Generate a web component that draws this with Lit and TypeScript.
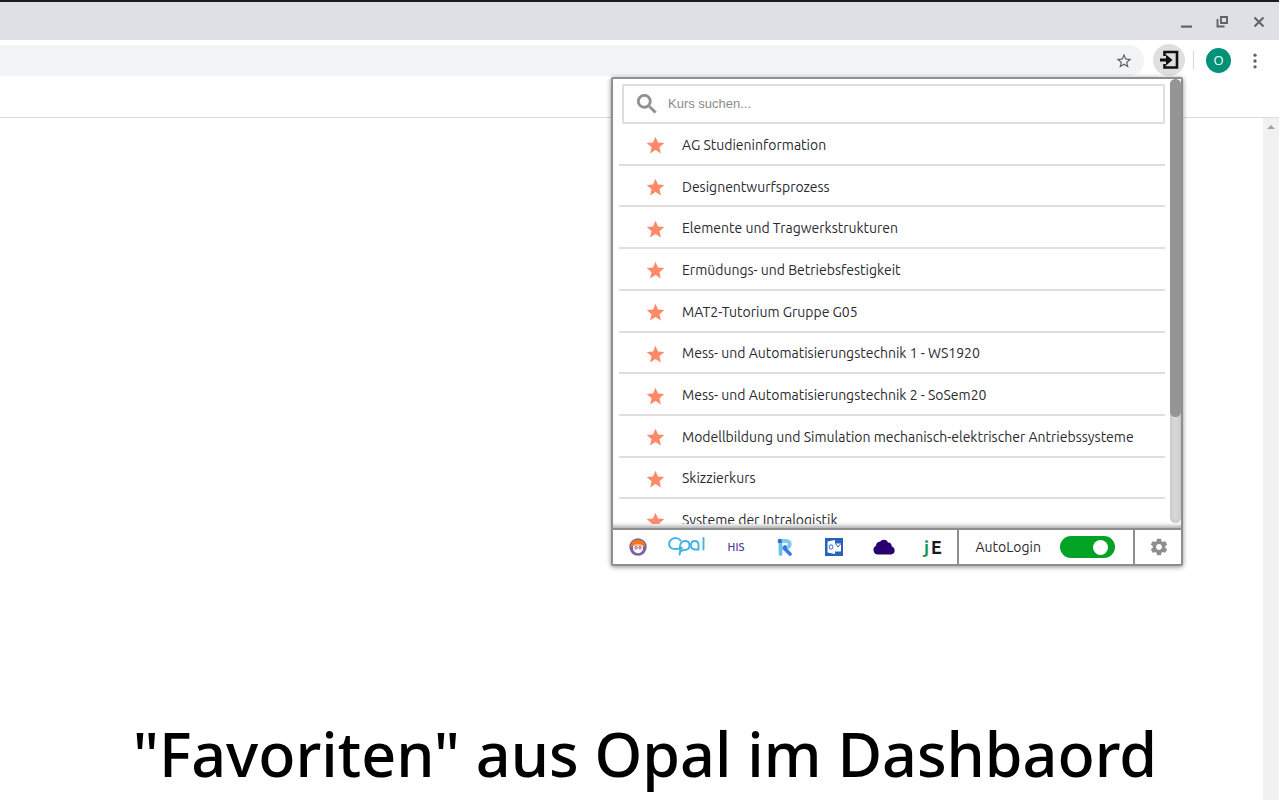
import { LitElement, html, css, svg } from "lit";
import { customElement, state } from "lit/decorators.js";

const COURSES = [
  "AG Studieninformation",
  "Designentwurfsprozess",
  "Elemente und Tragwerkstrukturen",
  "Ermüdungs- und Betriebsfestigkeit",
  "MAT2-Tutorium Gruppe G05",
  "Mess- und Automatisierungstechnik 1 - WS1920",
  "Mess- und Automatisierungstechnik 2 - SoSem20",
  "Modellbildung und Simulation mechanisch-elektrischer Antriebssysteme",
  "Skizzierkurs",
  "Systeme der Intralogistik",
];

const icon = (size: number, body: unknown) =>
  html`<svg width=${size} height=${size} viewBox="0 0 24 24" aria-hidden="true">${body}</svg>`;

const starPath = "M12 17.27L18.18 21l-1.64-7.03L22 9.24l-7.19-.61L12 2 9.19 8.63 2 9.24l5.46 4.73L5.82 21z";

@customElement("browser-bar")
export class BrowserBar extends LitElement {
  static styles = css`
    :host { display: block; color: #5f6368; }
    button { border: 0; padding: 0; margin: 0; background: none; color: inherit; display: grid; place-items: center; font: inherit; }
    svg { display: block; }
    .frame { box-sizing: border-box; height: 40px; border-top: 2px solid #1b1b1d; background: #dee0e6; display: flex; justify-content: flex-end; align-items: center; gap: 12px; padding: 2px 8px 0 0; }
    .frame button { width: 24px; height: 24px; }
    .tools { height: 37px; display: flex; align-items: center; padding-right: 14px; }
    .address { align-self: flex-end; margin-bottom: 1px; height: 31px; flex: 1; display: flex; align-items: center; background: #f1f3f5; border-radius: 0 16px 16px 0; padding-right: 11px; }
    .address input { flex: 1; min-width: 0; border: 0; background: none; outline: 0; }
    .ext { width: 32px; height: 32px; border-radius: 50%; background: #dfdfdf; color: #111; margin: 3px 0 0 9px; }
    .sep { width: 1px; height: 18px; background: #d5d7db; margin: 2px 12px 0 8px; }
    .avatar { width: 25px; height: 25px; border-radius: 50%; background: #009179; color: #fff; font: 13px/25px "Open Sans", sans-serif; margin-top: 3px; }
    .more { width: 20px; height: 24px; margin: 4px 0 0 14px; }
  `;
  render() {
    return html`
      <div class="frame">
        <button aria-label="Minimieren">${icon(24, svg`<path d="M6 15.500h11v2.200H6z" fill="currentColor"/>`)}</button>
        <button aria-label="Verkleinern">${icon(24, svg`<path d="M10 7h6v6h-6zM6.500 9v7.500h7" fill="none" stroke="currentColor" stroke-width="1.900"/>`)}</button>
        <button aria-label="Schließen">${icon(24, svg`<path d="M7.500 7.500l9 9M16.500 7.500l-9 9" stroke="currentColor" stroke-width="2"/>`)}</button>
      </div>
      <div class="tools">
        <div class="address">
          <input type="text" aria-label="Adresse" />
          <button aria-label="Lesezeichen">${icon(18, svg`<path d="M22 9.240l-7.190-.620L12 2 9.190 8.630 2 9.240l5.460 4.730L5.820 21 12 17.270 18.180 21l-1.630-7.030L22 9.240zM12 15.400l-3.760 2.270 1-4.280-3.320-2.880 4.380-.380L12 6.100l1.710 4.040 4.380.380-3.320 2.880 1 4.280L12 15.400z" fill="currentColor"/>`)}</button>
        </div>
        <button class="ext" aria-label="Erweiterung">${icon(24, svg`<path d="M7.500 8V4h12.500v15.500H7.500V16" fill="none" stroke="currentColor" stroke-width="2.600"/><path d="M3 10.400h6V6.500l6.500 5.500L9 17.500v-3.900H3z" fill="currentColor"/>`)}</button>
        <span class="sep"></span>
        <button class="avatar">O</button>
        <button class="more" aria-label="Menü">${icon(20, svg`<g fill="currentColor"><circle cx="12" cy="5" r="2"/><circle cx="12" cy="12" r="2"/><circle cx="12" cy="19" r="2"/></g>`)}</button>
      </div>
    `;
  }
}

@customElement("course-popup")
export class CoursePopup extends LitElement {
  @state() private autoLogin = true;

  static styles = css`
    :host { box-sizing: border-box; display: block; background: #fff; border: 2px solid #8e8e8e; border-radius: 2px; box-shadow: 0 1px 5px rgba(0, 0, 0, 0.45); font-family: Ubuntu, "Noto Sans", sans-serif; color: #2a2a2e; }
    a { color: inherit; text-decoration: none; }
    svg { display: block; }
    .view { box-sizing: border-box; display: flex; height: 449px; padding-bottom: 4px; overflow: hidden; box-shadow: inset 0 -5px 4px -3px rgba(0, 0, 0, 0.35); }
    .content { flex: 1; min-width: 0; padding: 5px 5px 0 6px; overflow: hidden; }
    .search { box-sizing: border-box; height: 40px; margin-left: 3px; border: 2px solid #dedede; border-radius: 2px; display: flex; align-items: center; gap: 8px; padding-left: 10px; color: #8d8d8d; }
    .search input { flex: 1; min-width: 0; border: 0; outline: 0; padding: 0; background: none; font: 13px/18px "Liberation Sans", Arial, sans-serif; color: #333; }
    .search input::placeholder { color: #8a8a8a; opacity: 1; }
    .list { list-style: none; margin: 0; padding: 0; height: 417px; display: grid; grid-auto-rows: 1fr; }
    .list li { box-sizing: border-box; border-bottom: 2px solid #dedede; display: flex; align-items: center; padding: 2px 0 0 26px; }
    .list a { display: flex; align-items: center; gap: 16px; font-size: 14px; line-height: 18px; white-space: nowrap; }
    .star { color: #ff8a69; padding-top: 2px; }
    .track { width: 11px; height: 444px; border-radius: 6px; background: #d6d6d6; box-shadow: inset 0 0 4px rgba(0, 0, 0, 0.14); }
    .thumb { height: 338px; border-radius: 6px; background: #959595; }
    .bar { height: 34px; border-top: 2px solid #8e8e8e; display: flex; align-items: stretch; }
    .links { flex: 1; display: grid; grid-template-columns: repeat(7, 1fr); }
    .links a { display: grid; place-items: center; padding-bottom: 1px; }
    .his { font-size: 11px; line-height: 16px; font-weight: 500; color: #53399a; -webkit-text-stroke: 0; }
    .je { font-size: 18px; line-height: 20px; font-weight: 700; color: #18181a; }
    .je div { display: flex; gap: 2px; }
    .je span { color: #12975a; }
    .auto { display: flex; align-items: center; justify-content: space-between; gap: 19px; padding: 0 18px 0 16px; border-left: 2px solid #8e8e8e; border-right: 2px solid #8e8e8e; font-size: 14px; line-height: 20px; }
    .auto input { appearance: none; margin: 0; width: 55px; height: 22px; border-radius: 11px; background: #bbb; padding: 4px; display: flex; box-sizing: border-box; }
    .auto input::before { content: ""; width: 15px; height: 15px; border-radius: 50%; background: #fff; }
    .auto input:checked { background: #02a224; justify-content: flex-end; padding-right: 7px; }
    .gear { width: 46px; border: 0; background: none; padding: 0 0 0 2px; color: #8e8e8e; display: grid; place-items: center; }
  `;
  render() {
    return html`
      <div class="view">
        <div class="content">
          <label class="search">
            ${icon(26, svg`<path d="M15.500 14h-.790l-.280-.270A6.470 6.470 0 0 0 16 9.500 6.500 6.500 0 1 0 9.500 16c1.610 0 3.090-.590 4.230-1.570l.270.280v.790l5 4.990L20.490 19l-4.990-5zm-6 0C7.010 14 5 11.990 5 9.500S7.010 5 9.500 5 14 7.010 14 9.500 11.990 14 9.500 14z" fill="currentColor" stroke="currentColor" stroke-width=".6"/>`)}
            <input type="text" placeholder="Kurs suchen..." aria-label="Kurs suchen" />
          </label>
          <ul class="list">
            ${COURSES.map((c) => html`<li><a href="#"><span class="star">${icon(21, svg`<path d=${starPath} fill="currentColor"/>`)}</span>${c}</a></li>`)}
          </ul>
        </div>
        <div class="track"><div class="thumb"></div></div>
      </div>
      <div class="bar">
        <nav class="links">
          <a href="#" aria-label="Startseite"><svg width="18" height="18" viewBox="0 0 18 18">
            <circle cx="9" cy="9" r="8.700" fill="#7b63a4"/>
            <path d="M1.800 9.500C1.500 4.500 4.500 1.800 9 1.800s7.500 2.700 7.200 7.700L14 7.500H4z" fill="#f8780f"/>
            <path d="M4 7.500c3-1.500 7-1.500 10 0v3c0 2.500-2 4.500-5 4.500s-5-2-5-4.500z" fill="#fff4f0"/>
            <path d="M4 7.300c3-1.300 7-1.300 10 0l-1 .700H5z" fill="#fbb98a"/>
            <g fill="none" stroke="#7b63a4"><circle cx="7" cy="9.700" r="1.200"/><circle cx="11" cy="9.700" r="1.200"/></g>
            <path d="M6.500 13.500L9 12l2.500 1.500L9 15.500z" fill="#fff"/>
          </svg></a>
          <a href="#" aria-label="Opal"><svg width="37" height="19" viewBox="0 0 37 19" fill="none" stroke="#43b2e4" stroke-width="1.900" stroke-linecap="round">
            <path d="M12.500 3.500C11 .500 6 .400 3.300 2.500-.200 5.300.500 10.500 4.500 11.600c3 .8 6.500.2 9.500-.8"/>
            <path d="M11.500 17.500c1.500-2.500.5-4 .5-7.500 0-4 2-6 5-6s4.500 1.800 4.500 4.300S19.800 13 16.500 13c-3.500 0-5 1.500-5 4.500"/>
            <path d="M30.500 12.500H27c-2.500 0-4-1.600-4-4.200S24.500 4 27 4s3.500 1.500 3.500 4v4.500M35.500 1v11.500"/>
          </svg></a>
          <a href="#" class="his">HIS</a>
          <a href="#" aria-label="Räume"><svg width="16" height="18" viewBox="0 0 16 18" fill="none" stroke-linecap="round">
            <path d="M4 3h5.500a3.200 3.200 0 0 1 0 6.400H7" stroke="#83c9ef" stroke-width="4"/>
            <path d="M3.500 5v11" stroke="#6dbfeb" stroke-width="3.800"/>
            <path d="M7.500 10.500l5.500 5.500" stroke="#367bdf" stroke-width="3.600"/>
            <circle cx="2.800" cy="3" r="2.200" fill="#2d72d8"/><circle cx="8" cy="9" r="1.800" fill="#2d72d8"/>
          </svg></a>
          <a href="#" aria-label="Outlook"><svg width="18" height="18" viewBox="0 0 18 18">
            <path d="M0 0h18v18H0z" fill="#2862b9"/><path d="M2.500 3.500L10 2v14l-7.500-1.500z" fill="#fff"/>
            <path d="M10 5.500h6v8h-6z" fill="#fff"/><path d="M10.500 5.500l2.500 3.500 3-3.500" fill="none" stroke="#2862b9" stroke-width="1"/>
            <ellipse cx="6" cy="9" rx="1.700" ry="2.100" fill="none" stroke="#6b93d2" stroke-width="1.200"/>
          </svg></a>
          <a href="#" aria-label="Cloud"><svg width="22" height="16" viewBox="0 0 22 16"><path d="M5 15.500a4.600 4.600 0 0 1-2-8.700C3 3.700 5.500 2.500 7 2.800 8.500.400 13.500-.200 15 3.500c2.200-.3 4 1.500 3.600 3.800 4.600 1.700 3.700 8.200-.6 8.200z" fill="#28006f"/></svg></a>
          <a href="#" class="je"><div><span>j</span>E</div></a>
        </nav>
        <label class="auto">AutoLogin
          <input type="checkbox" role="switch" .checked=${this.autoLogin} @change=${() => (this.autoLogin = !this.autoLogin)} />
        </label>
        <button class="gear" aria-label="Einstellungen">${icon(20, svg`<path fill="currentColor" d="M19.430 12.980c.040-.320.070-.640.070-.980s-.030-.660-.070-.980l2.110-1.650c.190-.150.240-.420.120-.640l-2-3.460c-.120-.220-.390-.300-.610-.220l-2.490 1c-.520-.400-1.080-.730-1.690-.980l-.380-2.650A.488.488 0 0 0 14 2h-4c-.250 0-.460.180-.490.420l-.380 2.650c-.610.250-1.170.590-1.690.980l-2.490-1c-.230-.090-.490 0-.610.220l-2 3.460c-.130.220-.070.490.120.640l2.110 1.650c-.040.320-.070.650-.070.980s.030.660.070.980l-2.110 1.650c-.190.150-.240.420-.120.640l2 3.460c.120.220.390.300.610.220l2.490-1c.520.400 1.080.730 1.690.980l.380 2.650c.030.240.240.420.490.420h4c.250 0 .460-.180.490-.420l.380-2.650c.610-.250 1.170-.590 1.690-.980l2.490 1c.230.090.490 0 .610-.220l2-3.460c.120-.220.070-.490-.120-.640zM12 15.500c-1.930 0-3.500-1.570-3.500-3.500s1.570-3.500 3.500-3.500 3.500 1.570 3.500 3.500-1.570 3.500-3.500 3.500z"/>`)}</button>
      </div>
    `;
  }
}

@customElement("app-root")
export class AppRoot extends LitElement {
  static styles = css`
    :host { display: flex; flex-direction: column; min-height: 100vh; position: relative; background: #fff; box-sizing: border-box; padding-right: 1px; overflow: hidden; }
    .strip { height: 40px; border-bottom: 1px solid #dcdde0; }
    .page { flex: 1; display: flex; }
    .body { flex: 1; display: flex; flex-direction: column; justify-content: flex-end; align-items: center; padding-left: 27px; }
    h1 { margin: 0 0 5px; font: 500 61px/82px "Noto Sans", sans-serif; color: #000; text-align: center; }
    .scroll { width: 16px; background: #f1f1f1; display: flex; justify-content: center; padding-top: 7px; box-sizing: border-box; }
    .arrow { width: 8px; height: 4px; background: #a3a3a3; clip-path: polygon(50% 0, 100% 100%, 0 100%); }
    .popup { position: absolute; top: 77px; right: 97px; width: 572px; max-width: 90%; }
  `;
  render() {
    return html`
      <browser-bar></browser-bar>
      <div class="strip"></div>
      <div class="page">
        <main class="body"><h1>"Favoriten" aus Opal im Dashbaord</h1></main>
        <div class="scroll"><div class="arrow"></div></div>
      </div>
      <course-popup class="popup"></course-popup>
    `;
  }
}
